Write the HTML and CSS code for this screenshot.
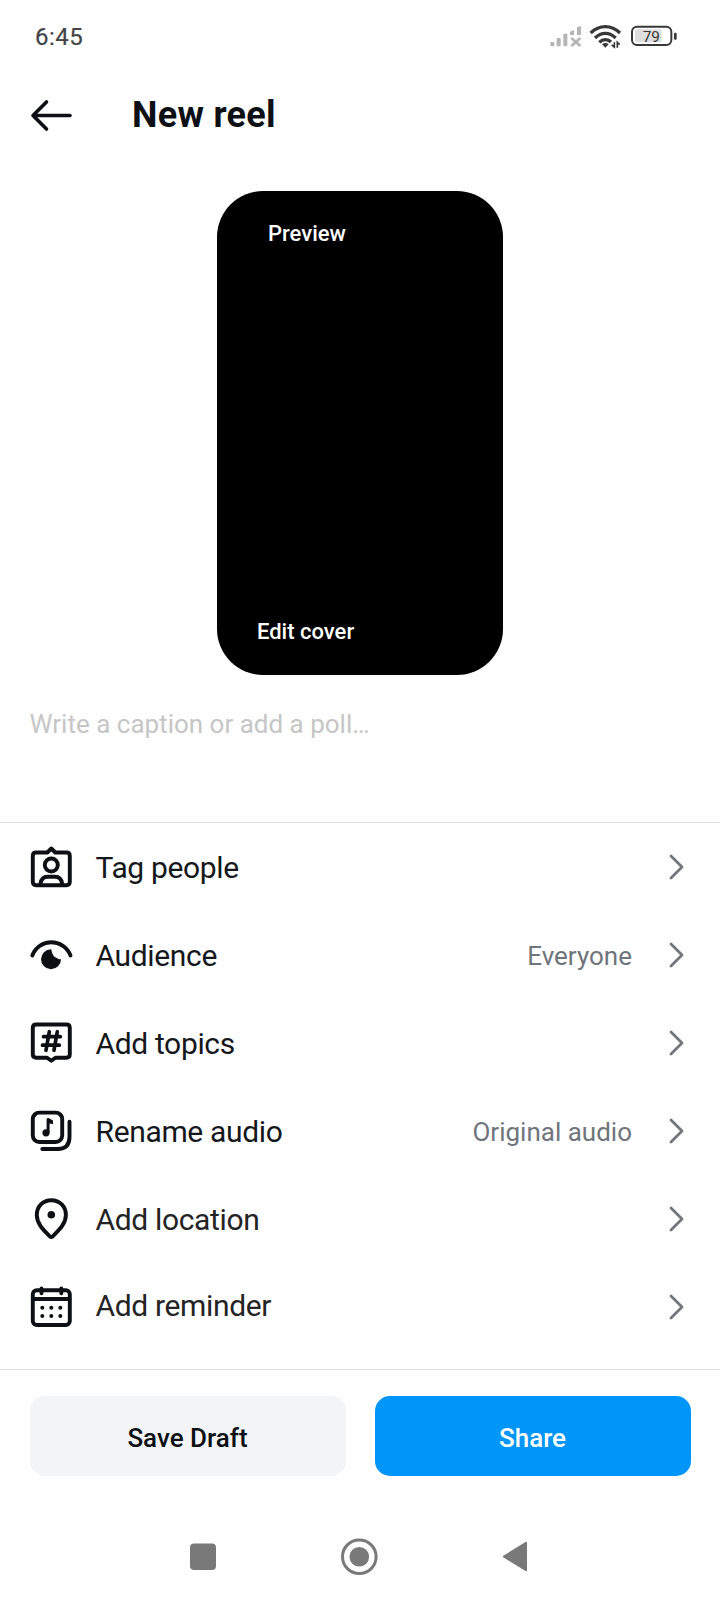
FILE: index.html
```html
<!DOCTYPE html>
<html lang="en">
<head>
<meta charset="utf-8">
<title>New reel</title>
<link rel="stylesheet" href="styles.css">
</head>
<body>
<div class="screen">
  <div class="status">
    <span class="clock">6:45</span>
    <svg class="indicators" viewBox="0 0 510 165" role="img" aria-label="Signal, Wi-Fi, battery">
      <g fill="#b5b5b5">
        <rect x="61" y="96" width="12" height="13" rx="3"/>
        <rect x="80" y="84" width="12" height="25" rx="3"/>
        <rect x="100" y="71" width="12" height="38" rx="3"/>
        <path d="M120 65l12-5v15h-12zM141 52l12-4v27h-12z"/>
        <path d="M124 84l27 24M151 84l-27 24" stroke="#b5b5b5" stroke-width="8"/>
      </g>
      <g fill="none" stroke="#383838" stroke-width="10">
        <path d="M182 69Q202 50 226 50T270 69"/>
        <path d="M195 84Q209 70 226 70T257 84"/>
        <path d="M208 97Q216 89 226 89T243 96"/>
      </g>
      <path d="M216 103q10-8 20 0l-10 10z" fill="#383838"/>
      <path d="M253 97v14l-8-6M262 113V97l7 7" fill="none" stroke="#383838" stroke-width="5"/>
      <rect x="306" y="50" width="118" height="55" rx="15" fill="#fff" stroke="#383838" stroke-width="6"/>
      <rect x="315" y="58" width="80" height="39" rx="8" fill="#dedede"/>
      <rect x="432" y="68" width="8" height="21" rx="3" fill="#383838"/>
      <text class="charge" x="364" y="95" text-anchor="middle">79</text>
    </svg>
  </div>
  <header class="header">
    <svg class="back" viewBox="0 0 48 36"><path d="M19.500 5L6 18.500L19.500 32M6.500 18.500H43"/></svg>
    <h1 class="title">New reel</h1>
  </header>
  <div class="cover">
    <span class="preview">Preview</span>
    <span class="edit">Edit cover</span>
  </div>
  <div class="caption">Write a caption or add a poll…</div>
  <ul class="options">
    <li class="row">
      <svg class="icon" viewBox="0 0 48 48"><path d="M9.200 9.500H20.300L24.300 5.500L28.300 9.500H39.400Q42.800 9.500 42.800 12.900V38.800Q42.800 42.200 39.400 42.200H9.200Q5.800 42.200 5.800 38.800V12.900Q5.800 9.500 9.200 9.500Z"/><circle cx="24.300" cy="22" r="6.500"/><path d="M13.500 42V40.500Q14.500 34 20.500 33.800H28.100Q34.100 34 35.100 40.500V42"/></svg>
      <span class="label">Tag people</span>
      <svg class="chevron" viewBox="0 0 16 28"><path d="M2 3L13 14L2 25"/></svg>
    </li>
    <li class="row">
      <svg class="icon" viewBox="0 0 48 48"><path d="M5.300 24.500C12 6.800 36.600 6.800 43.500 24.500"/><path class="solid" d="M24 18.300A10 10 0 1 0 34 28.300C31 28.600 30.500 26.800 28.700 26.400C26.500 26 26.600 24.300 25.500 22.800C24.500 21.500 25 19.500 24 18.300Z"/></svg>
      <span class="label">Audience</span>
      <span class="value">Everyone</span>
      <svg class="chevron" viewBox="0 0 16 28"><path d="M2 3L13 14L2 25"/></svg>
    </li>
    <li class="row">
      <svg class="icon" viewBox="0 0 48 48"><path d="M9.200 5.500H39.400Q42.800 5.500 42.800 8.900V35.300Q42.800 38.700 39.400 38.700H28.500L24.300 41.800L20.100 38.700H9.200Q5.800 38.700 5.800 35.300V8.900Q5.800 5.500 9.200 5.500Z"/><path class="hash" d="M22.300 12.700L19 31.300M30.300 12.700L27 31.300M16.500 17.700H33.300M15.500 26.200H32.300"/></svg>
      <span class="label">Add topics</span>
      <svg class="chevron" viewBox="0 0 16 28"><path d="M2 3L13 14L2 25"/></svg>
    </li>
    <li class="row">
      <svg class="icon" viewBox="0 0 48 48"><rect x="5.800" y="5.600" width="29.400" height="29.400" rx="6.500"/><path d="M42.500 14.700V30Q42.500 42 30.500 42H15.300"/><circle class="solid" cx="19" cy="25.800" r="3.600"/><path class="solid" d="M19.600 26V12.500Q19.700 10.500 21.500 11L26 13.600V17.300L22.600 16.500V26Z"/></svg>
      <span class="label">Rename audio</span>
      <span class="value">Original audio</span>
      <svg class="chevron" viewBox="0 0 16 28"><path d="M2 3L13 14L2 25"/></svg>
    </li>
    <li class="row">
      <svg class="icon" viewBox="0 0 48 48"><path d="M24.300 5.200C15.800 5.200 9.800 11.500 9.800 20C9.800 28.500 16 34.500 22.800 41.300Q24.300 42.800 25.800 41.300C32.600 34.500 38.900 28.500 38.900 20C38.900 11.500 32.800 5.200 24.300 5.200Z"/><circle class="solid" cx="24.300" cy="19.800" r="3.800"/></svg>
      <span class="label soft">Add location</span>
      <svg class="chevron" viewBox="0 0 16 28"><path d="M2 3L13 14L2 25"/></svg>
    </li>
    <li class="row">
      <svg class="icon" viewBox="0 0 48 48"><rect x="5.800" y="7.300" width="37" height="34.700" rx="4"/><path d="M6 16H42.500M14.500 5.500V10.200M34.300 5.500V10.200"/><g class="solid"><circle cx="15.300" cy="24.700" r="2"/><circle cx="24.300" cy="24.700" r="2"/><circle cx="33.300" cy="24.700" r="2"/><circle cx="15.300" cy="33" r="2"/><circle cx="24.300" cy="33" r="2"/><circle cx="33.300" cy="33" r="2"/></g></svg>
      <span class="label soft raised">Add reminder</span>
      <svg class="chevron" viewBox="0 0 16 28"><path d="M2 3L13 14L2 25"/></svg>
    </li>
  </ul>
  <div class="actions">
    <button class="button">Save Draft</button>
    <button class="button primary">Share</button>
  </div>
  <nav class="nav">
    <svg viewBox="0 0 338 37">
      <rect x="0" y="5.500" width="26" height="26.500" rx="4"/>
      <circle class="ring" cx="169.300" cy="18.700" r="16.800"/>
      <circle cx="169.300" cy="18.700" r="9.800"/>
      <path d="M313.600 17.600L335.500 4Q337 3.200 337 5V32Q337 33.800 335.500 33L313.600 19.600Q312.200 18.600 313.600 17.600Z"/>
    </svg>
  </nav>
</div>
</body>
</html>
```
FILE: styles.css
```css
* { box-sizing: border-box; }
body { margin: 0; background: #fefefe; font-family: Roboto, sans-serif; color: #0c1014; }
.screen { width: 720px; height: 1600px; display: flex; flex-direction: column; overflow: hidden; }
.status { height: 72px; padding: 10px 20px 0 35px; display: flex; justify-content: space-between; align-items: flex-start; }
.clock { font-size: 24px; line-height: 28px; padding-top: 13px; color: #444; letter-spacing: 0.5px; -webkit-text-stroke: 0.2px #444; }
.indicators { width: 170px; height: 55px; }
.charge { font-size: 46px; fill: #383838; }
.header { height: 84px; padding: 0 28px; display: flex; align-items: center; }
.back { width: 48px; height: 36px; fill: none; stroke: #0c1014; stroke-width: 3.6; stroke-linecap: round; stroke-linejoin: round; margin-top: 2px; margin-left: -1px; }
.title { margin: 2px 0 0 57px; font-size: 36px; line-height: 42px; font-weight: 700; letter-spacing: 0.3px; }
.cover { width: 286px; height: 484px; margin: 35px 0 0 217px; border-radius: 46px; background: #000; color: #fff; font-size: 22px; line-height: 26px; font-weight: 500; padding: 30px 40px 30px; display: flex; flex-direction: column; justify-content: space-between; }
.preview { padding-left: 11px; }
.caption { height: 147px; padding: 34px 29px 0 29.5px; font-size: 26px; line-height: 30px; color: #c6c6c6; }
.options { margin: 0; padding: 0; list-style: none; height: 548px; border-top: 1px solid #dcdfe3; border-bottom: 1px solid #dcdfe3; }
.row { height: 88px; padding: 0 35px 0 27px; display: flex; align-items: center; }
.icon { width: 48px; height: 48px; flex: none; fill: none; stroke: #0c1014; stroke-width: 3.9; stroke-linecap: round; stroke-linejoin: round; }
.icon .solid { fill: #0c1014; stroke: none; }
.icon .hash { stroke-width: 3.7; }
.label { flex: 1; margin-left: 20.5px; padding-top: 2px; font-size: 30px; line-height: 36px; letter-spacing: -0.35px; color: #15181b; }
.soft { color: #242424; }
.raised { padding: 0 0 2px; }
.value { font-size: 26px; line-height: 32px; padding-top: 2px; margin-right: 37px; color: #70757c; }
.chevron { width: 16px; height: 28px; flex: none; fill: none; stroke: #70757c; stroke-width: 2.8; stroke-linecap: round; stroke-linejoin: round; }
.actions { display: grid; grid-template-columns: 1fr 1fr; gap: 29px; padding: 26px 29.5px 0; }
.button { height: 80px; border: 0; border-radius: 15px; background: #f3f4f6; color: #0c1014; font: 500 26px/32px Roboto, sans-serif; padding: 3px 0 0; }
.primary { background: #0095f8; color: #fff; }
.nav { padding: 62px 0 0 190px; }
.nav svg { display: block; width: 338px; height: 37px; fill: #797979; }
.nav .ring { fill: none; stroke: #797979; stroke-width: 3; }
```
